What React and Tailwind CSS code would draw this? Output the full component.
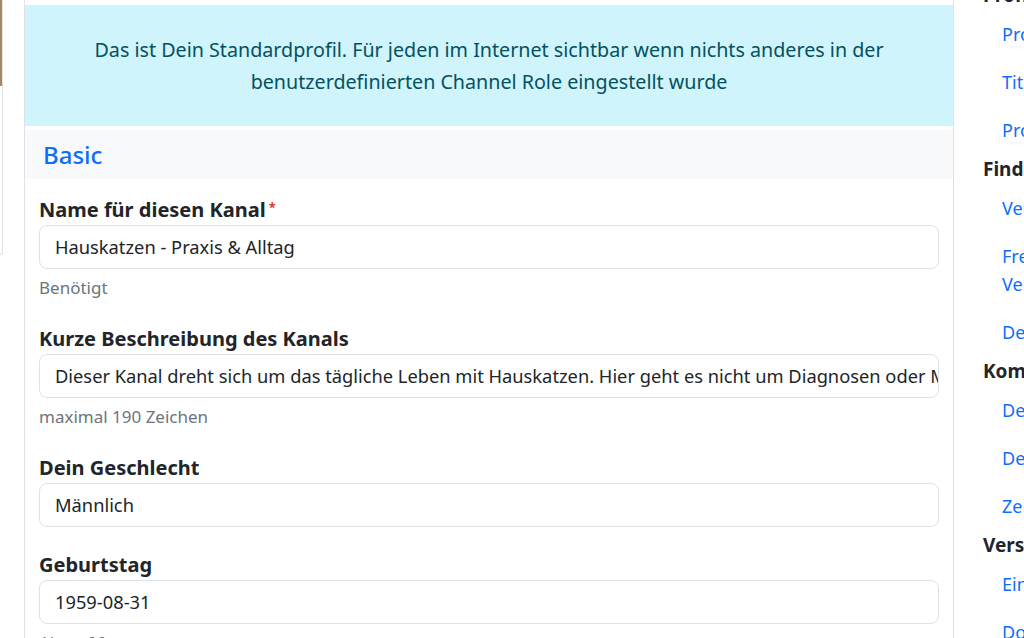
import React from "react"

const fields = [
  { label: "Name für diesen Kanal", value: "Hauskatzen - Praxis & Alltag", required: true, help: "Benötigt" },
  { label: "Kurze Beschreibung des Kanals", value: "Dieser Kanal dreht sich um das tägliche Leben mit Hauskatzen. Hier geht es nicht um Diagnosen oder Medizin, sondern um den Alltag.", help: "maximal 190 Zeichen" },
  { label: "Dein Geschlecht", value: "Männlich" },
  { label: "Geburtstag", value: "1959-08-31", help: "Alter: 66" },
]

const sections = [
  { title: "Profil", links: [["Profilname"], ["Titelbild"], ["Profilbild"]] },
  { title: "Finden", links: [["Verzeichnis"], ["Freunde", "Verbindungen"], ["Deine Kontakte"]] },
  { title: "Kommunikation", links: [["Deine Beiträge"], ["Deine Nachrichten"], ["Zeitzone"]] },
  { title: "Verschiedenes", links: [["Einstellungen"], ["Download"]] },
]

function Field({ field }) {
  return (
    <div className="mb-[23px]">
      <label className="block font-bold text-[20px] leading-[30px] text-[#212529]">
        {field.label}
        {field.required && <span className="text-[#dc3545] ml-[3px] text-[13px] align-top relative -top-[3px]">*</span>}
      </label>
      <div className="h-[44px] border border-[#dee2e6] rounded-[8px] px-[15px] flex items-center overflow-hidden">
        <span className="whitespace-nowrap text-[18.3px] text-[#212529]">{field.value}</span>
      </div>
      {field.help && (
        <div className="mt-[6px] text-[17px] leading-[26px] text-[#6c757d]">{field.help}</div>
      )}
    </div>
  )
}

export default function App() {
  return (
    <div className="w-[1024px] h-[638px] overflow-hidden bg-white flex font-['Noto_Sans',sans-serif]">

      {/* left column, mostly scrolled out of view */}
      <div className="w-[24px] shrink-0 flex flex-col">
        <div className="w-[3px] h-[255px] border-r border-b border-[#dee2e6] rounded-br-[6px] flex flex-col">
          <div className="h-[86px] w-[2px] bg-[#a58a5e]" />
        </div>
      </div>

      {/* main card */}
      <div className="w-[930px] shrink-0 border-x border-[#dee2e6]">
        <div className="mt-[5px] h-[121px] bg-[#cff4fc] text-[#055160] text-[19.7px] leading-[32px] flex items-center justify-center text-center px-6">
          <p>
            Das ist Dein Standardprofil. Für jeden im Internet sichtbar wenn nichts anderes in der<br />
            benutzerdefinierten Channel Role eingestellt wurde
          </p>
        </div>
        <div className="mt-[4px] h-[49px] bg-[#f8f9fa] flex items-center px-[18px]">
          <h3 className="text-[24px] font-medium text-[#0d6efd]">Basic</h3>
        </div>
        <div className="px-[14px] pt-[16px]">
          {fields.map(f => (
            <Field key={f.label} field={f} />
          ))}
        </div>
      </div>

      {/* right side navigation */}
      <div className="flex-1 overflow-hidden pl-[29px] -mt-[20px]">
        {sections.map(s => (
          <div key={s.title}>
            <div className="font-bold text-[19px] leading-[30px] text-[#212529] whitespace-nowrap">{s.title}</div>
            {s.links.map((l, i) => (
              <div key={i} className="pl-[19px] py-[10px] text-[18px] leading-[28px] text-[#0d6efd] whitespace-nowrap">
                {l.map((line, j) => (
                  <div key={j}>{line}</div>
                ))}
              </div>
            ))}
          </div>
        ))}
      </div>

    </div>
  )
}
